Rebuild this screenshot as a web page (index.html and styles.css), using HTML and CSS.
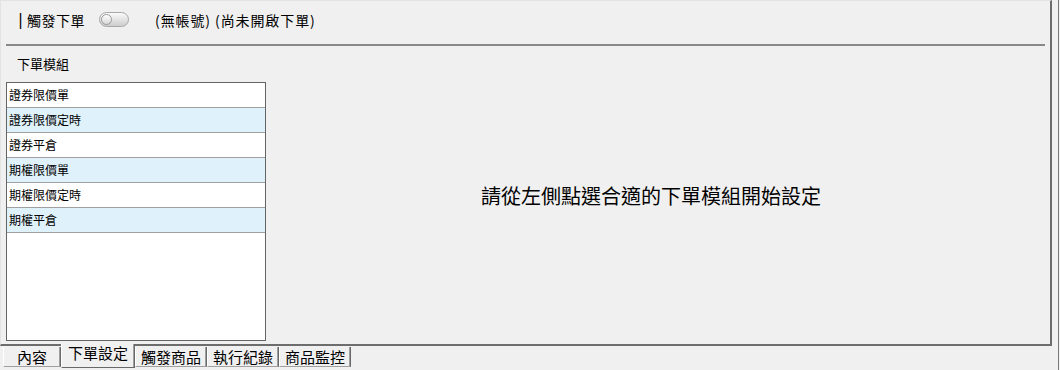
FILE: index.html
```html
<!DOCTYPE html>
<html lang="zh-Hant">
<head>
    <meta charset="UTF-8">
    <title>下單設定</title>
    <link rel="stylesheet" href="styles.css">
</head>
<body>
    <div class="window">
        <div class="main">
            <div class="panel">
                <!-- Trigger header -->
                <div class="header">
                    <span class="bar">|</span>
                    <span class="trigger-label">觸發下單</span>
                    <span class="toggle"><span class="knob"></span></span>
                    <span class="status">(無帳號) (尚未開啟下單)</span>
                </div>
                <div class="separator"></div>

                <div class="content">
                    <!-- Module list -->
                    <div class="modules">
                        <div class="modules-title">下單模組</div>
                        <div class="module-list">
                            <div class="module-row">證券限價單</div>
                            <div class="module-row alt">證券限價定時</div>
                            <div class="module-row">證券平倉</div>
                            <div class="module-row alt">期權限價單</div>
                            <div class="module-row">期權限價定時</div>
                            <div class="module-row alt">期權平倉</div>
                        </div>
                    </div>

                    <!-- Placeholder -->
                    <div class="hint">請從左側點選合適的下單模組開始設定</div>
                </div>
            </div>

            <!-- Tabs -->
            <div class="tabs">
                <div class="tab short">內容</div>
                <div class="tab active">下單設定</div>
                <div class="tab">觸發商品</div>
                <div class="tab">執行紀錄</div>
                <div class="tab">商品監控</div>
            </div>
        </div>
        <div class="edge"></div>
    </div>
</body>
</html>
```

FILE: styles.css
```css
/* Classic desktop window look */
body {
    margin: 0;
    background-color: #f0f0f0;
    font-family: "Noto Sans CJK TC", "Liberation Sans", sans-serif;
    color: #000;
}

.window {
    display: flex;
    width: 1060px;
    height: 370px;
    overflow: hidden;
}

.main {
    width: 1052px;
    display: flex;
    flex-direction: column;
}

.edge {
    width: 1px;
    margin-left: 6px;
    background-color: #7a7a7a;
}

.panel {
    height: 343px;
    border-top: 1px solid #e3e3e3;
    border-left: 1px solid #e3e3e3;
    border-right: 2px solid #6d6d6d;
    border-bottom: 2px solid #6d6d6d;
    display: flex;
    flex-direction: column;
}

/* Header */
.header {
    height: 37px;
    display: flex;
    align-items: center;
    padding-left: 14px;
    font-size: 14px;
}

.bar {
    font-family: "DejaVu Sans Mono", monospace;
    font-size: 15px;
    width: 12px;
    text-align: left;
    padding-left: 1px;
    box-sizing: border-box;
    color: #000;
}

.trigger-label {
    letter-spacing: 0.5px;
}

.toggle {
    width: 28px;
    height: 13px;
    margin-left: 14px;
    border: 1px solid #a8a8a8;
    border-radius: 8px;
    background: linear-gradient(#fafafa, #cdcdcd);
    display: flex;
    align-items: center;
}

.knob {
    width: 11px;
    height: 11px;
    margin-left: 1px;
    border: 1px solid #9a9a9a;
    border-radius: 50%;
    background: linear-gradient(#ffffff, #d8d8d8);
    box-sizing: border-box;
}

.status {
    margin-left: 26px;
    letter-spacing: 0.9px;
}

.separator {
    height: 2px;
    margin: 6px 5px 0 5px;
    background-color: #888;
}

/* Body */
.content {
    flex: 1;
    display: flex;
}

.modules {
    width: 260px;
    margin-left: 5px;
}

.modules-title {
    height: 36px;
    line-height: 36px;
    padding-left: 11px;
    font-size: 13px;
}

.module-list {
    height: 257px;
    background-color: #fff;
    border: 1px solid #646464;
}

.module-row {
    height: 24px;
    line-height: 24px;
    padding-left: 2px;
    font-size: 12px;
    border-bottom: 1px solid #a0a0a0;
}

.module-row.alt {
    background-color: #dff1fb;
}

.hint {
    flex: 1;
    display: flex;
    align-items: center;
    justify-content: center;
    padding-right: 14px;
    font-size: 20px;
}

/* Tabs */
.tabs {
    display: flex;
    padding-left: 3px;
    align-items: flex-start;
}

.tab {
    height: 19px;
    line-height: 19px;
    padding: 0 5px;
    font-size: 15px;
    border-left: 1px solid #fff;
    border-right: 1px solid #696969;
    border-bottom: 1px solid #a0a0a0;
    box-shadow: inset -1px 0 #a0a0a0;
    margin-top: 1px;
}

.tab.short {
    padding: 0 13px;
}

.tab.active {
    height: 23px;
    line-height: 18px;
    margin-top: -2px;
    padding: 0 6px;
    background-color: #f0f0f0;
    border-bottom: 1px solid #696969;
}
```
